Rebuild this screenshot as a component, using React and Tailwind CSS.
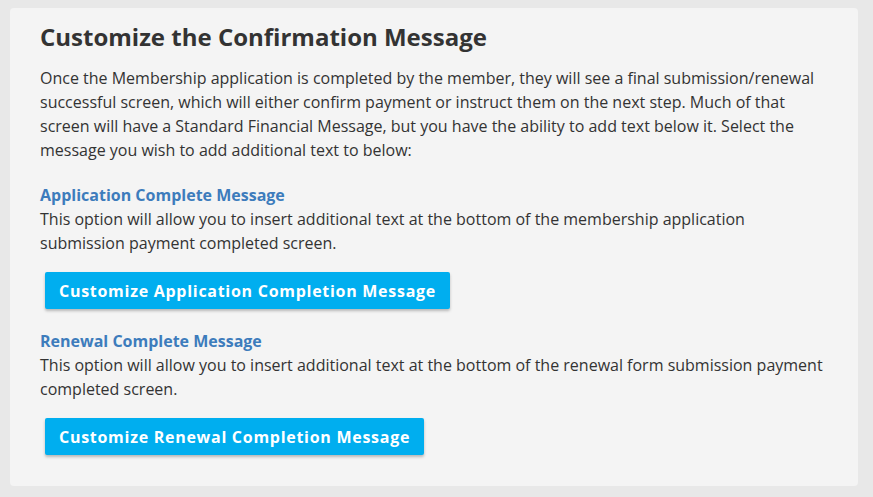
export default function App() {
  return (
    <div className="min-h-[497px] bg-[#e8e8e8] pt-[8px] pl-[10px] pr-[15px] pb-[11px] font-['Open_Sans',sans-serif] text-[#333]">
      <div className="bg-[#f4f4f4] rounded-[4px] pt-[16px] pb-[31px] px-[30px]">
        <h1 className="text-[24px] leading-[26px] font-bold text-[#333]">
          Customize the Confirmation Message
        </h1>
        <p className="mt-[16px] text-[16px] leading-[24px]">
          Once the Membership application is completed by the member, they will see a final submission/renewal
          successful screen, which will either confirm payment or instruct them on the next step. Much of that
          screen will have a Standard Financial Message, but you have the ability to add text below it. Select the
          message you wish to add additional text to below:
        </p>

        <h2 className="mt-[21px] text-[16px] leading-[24px] font-bold text-[#3d7cbc]">
          Application Complete Message
        </h2>
        <p className="text-[16px] leading-[24px]">
          This option will allow you to insert additional text at the bottom of the membership application
          submission payment completed screen.
        </p>
        <button className="mt-[17px] ml-[5px] h-[37px] px-[14px] rounded-[2px] bg-[#00aeef] text-white text-[16px] font-bold tracking-[0.72px] shadow-[0_2px_3px_rgba(0,0,0,0.25)]">
          Customize Application Completion Message
        </button>

        <h2 className="mt-[20px] text-[16px] leading-[24px] font-bold text-[#3d7cbc]">
          Renewal Complete Message
        </h2>
        <p className="text-[16px] leading-[24px]">
          This option will allow you to insert additional text at the bottom of the renewal form submission payment
          completed screen.
        </p>
        <button className="block mt-[17px] ml-[5px] h-[37px] px-[14px] rounded-[2px] bg-[#00aeef] text-white text-[16px] font-bold tracking-[0.72px] shadow-[0_2px_3px_rgba(0,0,0,0.25)]">
          Customize Renewal Completion Message
        </button>
      </div>
    </div>
  );
}
